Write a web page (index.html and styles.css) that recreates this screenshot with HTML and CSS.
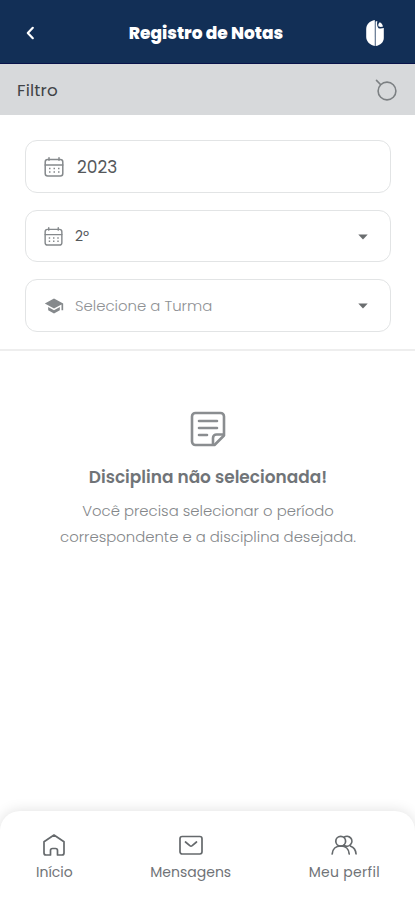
FILE: index.html
```html
<!DOCTYPE html>
<html lang="pt-BR">
<head>
<meta charset="utf-8">
<meta name="viewport" content="width=device-width, initial-scale=1">
<title>Registro de Notas</title>
<link rel="stylesheet" href="styles.css">
</head>
<body>
<div class="app">
  <header class="topbar">
    <svg class="back" viewBox="0 0 12 16"><path d="M8.800 2.800 3.800 8l5 5.200"/></svg>
    <h1 class="title">Registro de Notas</h1>
    <svg class="logo" viewBox="0 0 20 28"><path d="M9.800 1v26C4.500 26 1.200 22 1.200 18V10C1.200 5.500 4.500 2 9.800 1Z"/><path d="M10.600 27V2.500L12.300 2C11.800 5 12 7.500 13.500 9.200c1.700.5 3.500.3 5.300-.2V19C18.800 23 15.500 26.500 10.600 27Z"/><path d="M13.400 7.300C13 5.500 13.500 4 14.800 3.200c1.800.8 2.800 2.300 3.200 4.400-1.600.5-3.200.5-4.600-.3Z"/></svg>
  </header>
  <section class="filterbar">
    <span class="filter-label">Filtro</span>
    <svg class="filter-icon" viewBox="0 0 24 24"><circle cx="13" cy="13" r="8.900"/><path d="M6.500 6.500 2.500 2.400"/></svg>
  </section>
  <form class="filters">
    <div class="field">
      <svg class="calendar" viewBox="0 0 20 20"><rect x="1.200" y="2.500" width="17.600" height="16.500" rx="2.500"/><path d="M1.200 8h17.600M5 .8v2.500M15 .8v2.500"/><path class="dots" d="M5 11.500h11M5 15h11"/></svg>
      <span class="value year">2023</span>
    </div>
    <div class="field select">
      <svg class="calendar small" viewBox="0 0 20 20"><rect x="1.200" y="2.500" width="17.600" height="16.500" rx="2.500"/><path d="M1.200 8h17.600M5 .8v2.500M15 .8v2.500"/><path class="dots" d="M5 11.500h11M5 15h11"/></svg>
      <span class="value period">2º</span>
      <svg class="caret" viewBox="0 0 10 6"><path d="M.3.500h9.400L5 5.600Z"/></svg>
    </div>
    <div class="field select">
      <svg class="cap" viewBox="0 0 24 24"><path d="M5 13.180v4L12 21l7-3.820v-4L12 17l-7-3.820zM12 3 1 9l11 6 9-4.910V17h2V9L12 3z"/></svg>
      <span class="value placeholder">Selecione a Turma</span>
      <svg class="caret" viewBox="0 0 10 6"><path d="M.3.500h9.400L5 5.600Z"/></svg>
    </div>
  </form>
  <main class="empty">
    <svg class="note" viewBox="0 0 36 36"><path d="M24.500 34H5.500A3.500 3.500 0 0 1 2 30.500v-25A3.500 3.500 0 0 1 5.500 2h25A3.500 3.500 0 0 1 34 5.500v19Z"/><path d="M23 33.500V27a3.500 3.500 0 0 1 3.500-3.500h7M9 10h18M9 17h18M9 24h8"/></svg>
    <h2 class="empty-title">Disciplina não selecionada!</h2>
    <p class="empty-text">Você precisa selecionar o período<br>correspondente e a disciplina desejada.</p>
  </main>
  <nav class="tabs">
    <a class="tab home"><svg viewBox="0 0 24 24"><path d="M2 8.800 12 2l10 6.800V20a2 2 0 0 1-2 2h-4.500v-4.500a2 2 0 0 0-2-2h-3a2 2 0 0 0-2 2V22H4a2 2 0 0 1-2-2Z"/></svg><span>Início</span></a>
    <a class="tab messages"><svg viewBox="0 0 26 24"><rect x="2" y="3.500" width="22" height="17.500" rx="2.200"/><path d="m7.500 9 4.300 3.600a2 2 0 0 0 2.400 0L18.500 9"/></svg><span>Mensagens</span></a>
    <a class="tab profile"><svg viewBox="0 0 28 24"><circle cx="10.700" cy="8.200" r="4.900"/><path d="M2.200 21c.3-5 3.700-8 8.500-8s8.200 3 8.500 8M14 4.300a4.900 4.900 0 1 1 0 7.800M20.700 13.300c3 1.100 5 3.700 5.300 7.500"/></svg><span>Meu perfil</span></a>
  </nav>
</div>
</body>
</html>
```

FILE: styles.css
```css
* { box-sizing: border-box; }
body { margin: 0; background: #fff; }
.app {
  width: 100%;
  height: 900px;
  display: flex;
  flex-direction: column;
  overflow: hidden;
  font-family: Poppins, Inter, "Liberation Sans", sans-serif;
  color: #55585b;
}
svg { display: block; flex: none; fill: none; stroke-linecap: round; stroke-linejoin: round; }
.topbar {
  height: 64px;
  padding: 2px 30px 0 24px;
  display: grid;
  grid-template-columns: 38px 1fr 35px;
  align-items: center;
  background: #122f56;
  border-bottom: 1px solid #08134a;
}
.back { width: 12px; height: 16px; stroke: #fff; stroke-width: 2.2; }
.title { margin: 0; text-align: center; color: #fff; font-size: 17px; font-weight: 800; letter-spacing: 0; white-space: nowrap; }
.logo { width: 20px; height: 28px; fill: #fff; justify-self: end; }
.filterbar {
  height: 51px;
  padding: 0 17px;
  display: flex;
  align-items: center;
  justify-content: space-between;
  background: #d7d9db;
}
.filter-label { font-size: 16.800px; color: #414447; letter-spacing: .2px; }
.filter-icon { width: 24px; height: 24px; stroke: #7c8083; stroke-width: 1.6; }
.filters {
  height: 236px;
  padding: 25px 24px 0 25px;
  display: flex;
  flex-direction: column;
  gap: 17px;
  border-bottom: 2px solid #eee;
}
.field {
  height: 52.500px;
  padding: 1px 22px 0 18px;
  display: flex;
  align-items: center;
  border: 1.500px solid #e2e4e5;
  border-radius: 12px;
}
.field.select { padding-top: 2px; }
.calendar { width: 20px; height: 20px; stroke: #85898c; stroke-width: 1.5; }
.calendar.small { width: 19px; height: 19px; }
.calendar .dots { stroke-dasharray: 1.500 3; stroke-linecap: butt; }
.value { flex: 1; white-space: nowrap; font-size: 15px; color: #55585b; }
.year { margin-left: 13px; font-size: 17px; }
.period { margin-left: 12px; font-size: 14px; }
.placeholder { margin-left: 11px; color: #8e9194; font-size: 14.900px; font-weight: 300; }
.caret { width: 10px; height: 6px; fill: #6a6d6f; }
.cap { width: 20px; height: 20px; fill: #85898c; }
.empty { flex: 1; padding: 60px 0 0 1px; display: flex; flex-direction: column; align-items: center; }
.note { width: 36px; height: 36px; stroke: #8a8d90; stroke-width: 2.6; }
.empty-title { margin: 18px 0 0; font-size: 16.950px; line-height: 24px; font-weight: 600; color: #707478; white-space: nowrap; }
.empty-text { margin: 9px 0 0; font-size: 14.850px; line-height: 25.500px; font-weight: 300; color: #84878a; text-align: center; white-space: nowrap; }
.tabs {
  height: 89px;
  padding: 22px 35px 0 36px;
  display: flex;
  justify-content: space-between;
  background: #fff;
  border-radius: 20px 20px 0 0;
  box-shadow: 0 0 14px rgba(0, 0, 0, .13);
}
.tab { display: flex; flex-direction: column; align-items: center; gap: 1px; font-size: 14px; line-height: 28px; color: #707377; }
.profile { letter-spacing: .3px; }
.tab svg { height: 24px; width: auto; stroke: #65696c; stroke-width: 1.7; }
```
